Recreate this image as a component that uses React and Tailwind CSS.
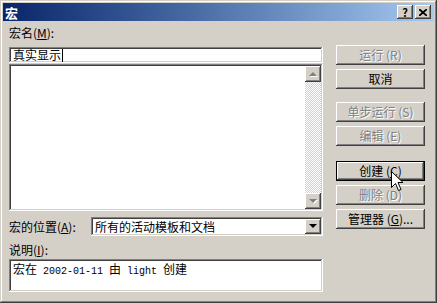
import React from 'react';

const raised =
  '[box-shadow:inset_-1px_-1px_#404040,inset_1px_1px_#fff,inset_-2px_-2px_#808080,inset_2px_2px_#d4d0c8]';
const sunken =
  '[box-shadow:inset_-1px_-1px_#fff,inset_1px_1px_#808080,inset_-2px_-2px_#d4d0c8,inset_2px_2px_#404040]';

/**
 * Push button in the classic 3D style
 */
function Button({ children, disabled, isDefault, className = '' }) {
  const text = disabled
    ? 'text-[#808080] [text-shadow:1px_1px_0_#fff]'
    : 'text-black';
  if (isDefault) {
    return (
      <div className={`h-[20px] w-[89px] border border-black ${className}`}>
        <div className={`flex h-full w-full items-center justify-center bg-[#d4d0c8] ${raised} text-[12px] leading-none ${text}`}>
          {children}
        </div>
      </div>
    );
  }
  return (
    <div
      className={`flex h-[20px] w-[89px] items-center justify-center bg-[#d4d0c8] ${raised} text-[12px] leading-none ${text} ${className}`}
    >
      {children}
    </div>
  );
}

function Tri({ dir = 'down', color = '#000', shadow }) {
  const pts = dir === 'up' ? '4,1 0,5 8,5' : '0,1 8,1 4,5';
  return (
    <svg width="9" height="7" viewBox="0 0 9 7">
      {shadow && <polygon points={pts} fill="#fff" transform="translate(1,1)" />}
      <polygon points={pts} fill={color} />
    </svg>
  );
}

function ScrollBtn({ dir, disabled }) {
  return (
    <div className={`flex h-[16px] w-[16px] items-center justify-center bg-[#d4d0c8] ${raised}`}>
      <Tri dir={dir} color={disabled ? '#808080' : '#000'} shadow={disabled} />
    </div>
  );
}

function Cursor() {
  return (
    <svg
      className="absolute left-[391px] top-[171px]"
      width="13"
      height="21"
      viewBox="0 0 13 21"
    >
      <path
        d="M0.5 0.5 L0.5 16.5 L4.5 12.5 L7.5 19.5 L10 18.5 L7 11.5 L12 11.5 Z"
        fill="#fff"
        stroke="#000"
        strokeWidth="1"
      />
    </svg>
  );
}

export default function App() {
  return (
    <div className="relative h-[303px] w-[437px] overflow-hidden bg-[#d4d0c8] p-[3px] font-['Noto_Sans_CJK_SC',sans-serif] text-[12px] text-black [box-shadow:inset_-1px_-1px_#404040,inset_1px_1px_#d4d0c8,inset_-2px_-2px_#808080,inset_2px_2px_#fff]">
      {/* Title bar */}
      <div className="flex h-[18px] items-center justify-between bg-gradient-to-r from-[#0a246a] to-[#a6caf0] pl-[2px] pr-[3px]">
        <span className="text-[13px] font-bold leading-none text-white">宏</span>
        <div className="flex gap-[2px]">
          <div className={`flex h-[14px] w-[16px] items-center justify-center bg-[#d4d0c8] ${raised} text-[11px] font-bold leading-none`}>
            ?
          </div>
          <div className={`flex h-[14px] w-[16px] items-center justify-center bg-[#d4d0c8] ${raised}`}>
            <svg width="8" height="7" viewBox="0 0 8 7">
              <path d="M0 0 L8 7 M8 0 L0 7" stroke="#000" strokeWidth="1.8" />
            </svg>
          </div>
        </div>
      </div>

      {/* Body */}
      <div className="flex pl-[6px]">
        {/* Left column */}
        <div className="flex w-[314px] flex-col">
          <div className="mt-[4px] flex h-[16px] items-center leading-none">
            宏名(<u>M</u>):
          </div>
          <div className={`mt-[6px] flex h-[16px] items-center bg-white pl-[4px] ${sunken} leading-none`}>
            真实显示
            <span className="ml-[1px] inline-block h-[13px] w-[1px] bg-black" />
          </div>
          <div className={`mt-[1px] flex h-[147px] justify-end bg-white p-[2px] ${sunken}`}>
            <div className="flex w-[16px] flex-col">
              <ScrollBtn dir="up" disabled />
              <div className="flex-1 bg-[repeating-conic-gradient(#fff_0_25%,#d4d0c8_0_50%)] bg-[length:2px_2px]" />
              <ScrollBtn dir="down" disabled />
            </div>
          </div>

          <div className="mt-[6px] flex h-[19px] items-center">
            <span className="w-[82px] leading-none">
              宏的位置(<u>A</u>):
            </span>
            <div className={`flex h-full flex-1 items-center bg-white p-[2px] ${sunken}`}>
              <span className="flex-1 pl-[2px] leading-none">所有的活动模板和文档</span>
              <div className={`flex h-[15px] w-[16px] items-center justify-center bg-[#d4d0c8] ${raised}`}>
                <Tri dir="down" />
              </div>
            </div>
          </div>

          <div className="mt-[6px] flex h-[16px] items-center leading-none">
            说明(<u>I</u>):
          </div>
          <div className={`mt-[1px] h-[33px] bg-white px-[4px] pt-[4px] ${sunken} leading-none`}>
            宏在<span className="font-['Liberation_Mono',monospace] text-[10px]"> 2002-01-11 </span>由
            <span className="font-['Liberation_Mono',monospace] text-[10px]"> light </span>创建
          </div>
        </div>

        {/* Buttons */}
        <div className="ml-[13px] flex flex-col">
          <Button disabled className="mt-[24px]">运行 (R)</Button>
          <Button className="mt-[4px]">取消</Button>
          <Button disabled className="mt-[13px]">单步运行 (S)</Button>
          <Button disabled className="mt-[4px]">编辑 (E)</Button>
          <Button isDefault className="mt-[15px]">
            创建 (<u>C</u>)
          </Button>
          <Button disabled className="mt-[4px]">删除 (D)</Button>
          <Button className="mt-[4px]">
            管理器 (<u>G</u>)...
          </Button>
        </div>
      </div>

      <Cursor />
    </div>
  );
}
